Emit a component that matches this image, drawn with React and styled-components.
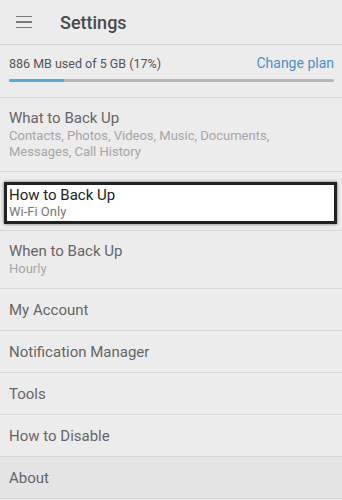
import React from 'react'
import styled, { createGlobalStyle } from 'styled-components'

const Global = createGlobalStyle`
  html, body {
    margin: 0;
    padding: 0;
    background: #ececec;
    font-family: Roboto, "Noto Sans", sans-serif;
  }
`

const Page = styled.div`
  width: 342px;
  height: 500px;
  overflow: hidden;
  background: #ececec;
`

const Header = styled.div`
  height: 44px;
  display: flex;
  align-items: center;
  border-bottom: 1px solid #d2d2d2;
`

const Burger = styled.div`
  width: 16px;
  margin-left: 16px;
  margin-right: 28px;
  display: flex;
  flex-direction: column;
  gap: 4px;
  span {
    display: block;
    height: 1.5px;
    background: #7a7a7a;
  }
`

const Title = styled.h1`
  margin: 0;
  font-size: 18px;
  font-weight: 500;
  color: #4a4a4a;
`

const Storage = styled.div`
  padding: 10px 8px 15px 9px;
  border-bottom: 1px solid #d6d6d6;
`

const StorageLine = styled.div`
  display: flex;
  justify-content: space-between;
  align-items: center;
  height: 16px;
`

const Used = styled.span`
  font-size: 12.5px;
  color: #555;
`

const ChangePlan = styled.span`
  font-size: 14px;
  font-weight: 400;
  color: #4b8fcb;
`

const Bar = styled.div`
  margin-top: 8px;
  height: 3px;
  border-radius: 2px;
  background: #b8b8b8;
  overflow: hidden;
`

const Fill = styled.div`
  height: 100%;
  background: #4fb0da;
`

const Row = styled.div`
  border-bottom: 1px solid #d8d8d8;
  background: ${p => (p.$shade ? '#e4e4e4' : '#ececec')};
  padding: ${p => (p.$plain ? '0 9px' : '10px 9px 11px')};
  height: ${p => (p.$plain ? '42px' : 'auto')};
  display: flex;
  flex-direction: column;
  justify-content: center;
  box-sizing: border-box;
`

const SelectedRow = styled.div`
  border-bottom: 1px solid #d8d8d8;
  padding: 10px 5px 6px 4px;
`

const SelectedBox = styled.div`
  background: #fff;
  border: 3px solid #222;
  box-shadow: 0 0 3px rgba(0, 0, 0, 0.55);
  padding: 0 2px;
  height: 36px;
  display: flex;
  flex-direction: column;
  justify-content: center;
`

const ItemTitle = styled.div`
  font-size: 15px;
  line-height: ${p => (p.$tight ? '18px' : '20px')};
  color: ${p => (p.$dark ? '#222' : '#666')};
`

const ItemSub = styled.div`
  font-size: 13px;
  line-height: 16px;
  color: ${p => (p.$dark ? '#777' : '#a6a6a6')};
`

const plainItems = ['My Account', 'Notification Manager', 'Tools', 'How to Disable']

export default function App() {
  const percent = 17
  return (
    <Page>
      <Global />
      <Header>
        <Burger>
          <span />
          <span />
          <span />
        </Burger>
        <Title>Settings</Title>
      </Header>
      <Storage>
        <StorageLine>
          <Used>886 MB used of 5 GB (17%)</Used>
          <ChangePlan>Change plan</ChangePlan>
        </StorageLine>
        <Bar>
          <Fill style={{ width: `${percent}%` }} />
        </Bar>
      </Storage>
      <Row>
        <ItemTitle>What to Back Up</ItemTitle>
        <ItemSub>
          Contacts, Photos, Videos, Music, Documents,
          <br />
          Messages, Call History
        </ItemSub>
      </Row>
      <SelectedRow>
        <SelectedBox>
          <ItemTitle $dark $tight>How to Back Up</ItemTitle>
          <ItemSub $dark>Wi-Fi Only</ItemSub>
        </SelectedBox>
      </SelectedRow>
      <Row>
        <ItemTitle>When to Back Up</ItemTitle>
        <ItemSub>Hourly</ItemSub>
      </Row>
      {plainItems.map(item => (
        <Row $plain key={item}>
          <ItemTitle>{item}</ItemTitle>
        </Row>
      ))}
      <Row $plain $shade>
        <ItemTitle>About</ItemTitle>
      </Row>
    </Page>
  )
}
